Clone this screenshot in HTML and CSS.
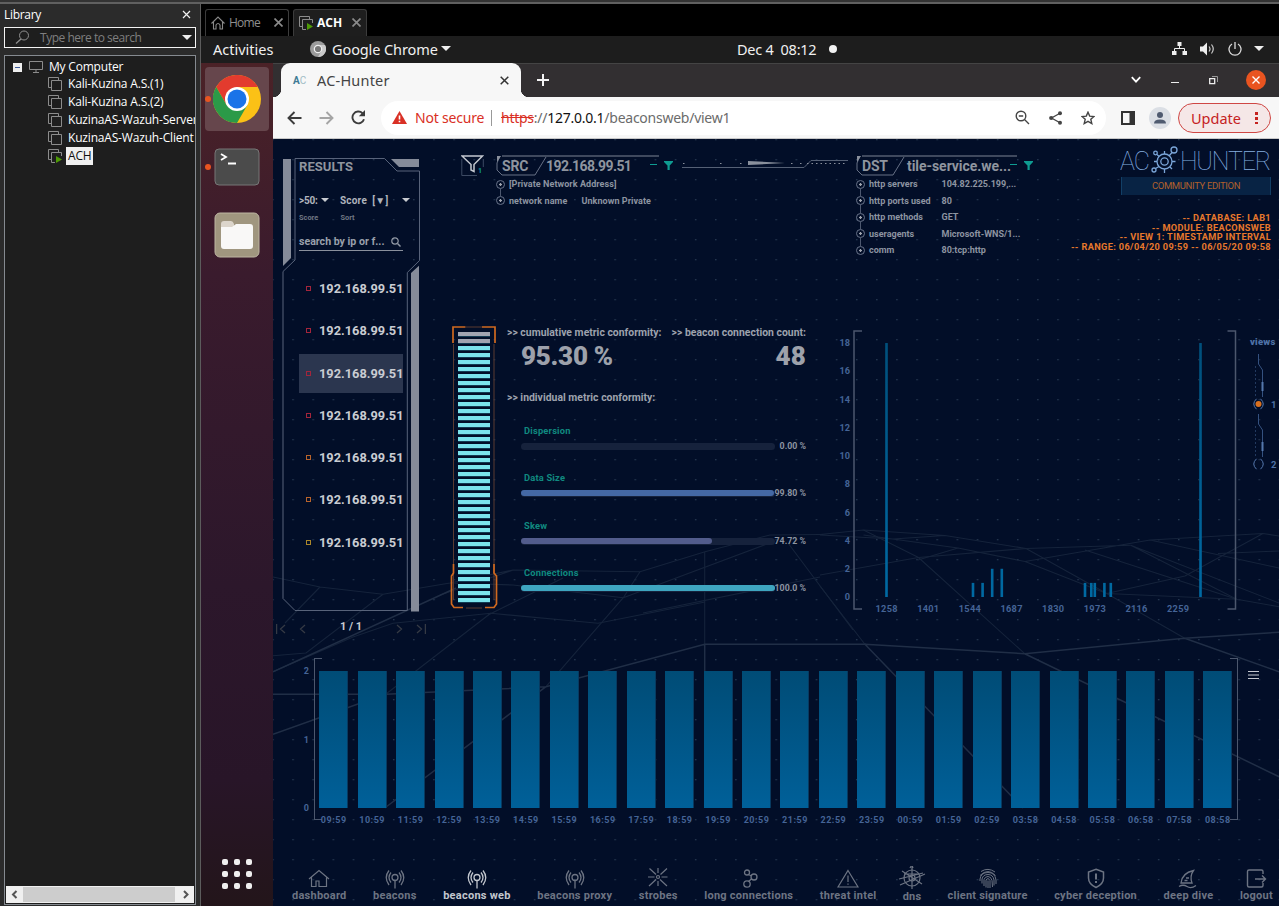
FILE: index.html
```html
<!DOCTYPE html>
<html lang="en">
<head>
<meta charset="utf-8">
<title>AC-Hunter</title>
<link rel="stylesheet" href="styles.css">
</head>
<body>
<svg class="defs" width="0" height="0">
  <defs>
    <symbol id="vm" viewBox="0 0 14 14"><path d="M3 10.500H.5V.5H10.500V3M3.500 3.500H13.500V13.500H3.500Z" fill="none" stroke="#8c8c8c"/></symbol>
    <symbol id="vmrun" viewBox="0 0 14 14"><path d="M3 10.500H.5V.5H10.500V3M7 13.500H3.500V3.500H13.500V7" fill="none" stroke="#8c8c8c"/><path d="M8 7l6 3.500-6 3.500z" fill="#4e9a06"/></symbol>
    <symbol id="beacon" viewBox="0 0 22 22"><g fill="none" stroke="currentColor" stroke-width="1.300"><circle cx="11" cy="9.500" r="3"/><path d="M11 12.500V20.500M7 14.500Q3 9.500 7 4.500M15 14.500Q19 9.500 15 4.500M5 17Q-.5 9.500 5 2.500M17 17Q22.500 9.500 17 2.500"/></g></symbol>
    <symbol id="funnel" viewBox="0 0 9 9"><path d="M0 0H9V1L5.700 4.500V9H3.500V4.500L0 1Z" fill="#0f9c92"/></symbol>
    <symbol id="rail" viewBox="0 0 14 44"><path d="M6.500 0V10L10.500 16V43" fill="none" stroke="#34517f"/><path d="M10.500 28V37" stroke="#5578ad" stroke-width="2"/><path d="M3.500 12V43" stroke="#22395f" stroke-dasharray="2 2"/></symbol>
  </defs>
</svg>
<div class="screen">
  <div class="strip"></div>
  <aside class="library">
    <div class="lib-head"><span>Library</span><svg width="9" height="9" viewBox="0 0 9 9"><path d="M1 1l7 7M8 1l-7 7" stroke="#f2f2f2" stroke-width="1.200"/></svg></div>
    <div class="lib-search"><svg width="15" height="15" viewBox="0 0 15 15"><circle cx="9" cy="5.500" r="4.500" fill="none" stroke="#8f8f8f"/><path d="M6 9L1 13.500" stroke="#8f8f8f" stroke-width="1.300"/></svg><span>Type here to search</span><i class="tri"></i></div>
    <div class="tree">
      <div class="root"><i class="minus"></i><svg width="14" height="12" viewBox="0 0 14 12"><path d="M.5.5H13.500V8.500H.5ZM7 9V11M4 11.500H10" fill="none" stroke="#8c8c8c"/></svg><span>My Computer</span></div>
      <div class="vm"><svg width="14" height="14"><use href="#vm"/></svg><span>Kali-Kuzina A.S.(1)</span></div>
      <div class="vm"><svg width="14" height="14"><use href="#vm"/></svg><span>Kali-Kuzina A.S.(2)</span></div>
      <div class="vm"><svg width="14" height="14"><use href="#vm"/></svg><span>KuzinaAS-Wazuh-Server</span></div>
      <div class="vm"><svg width="14" height="14"><use href="#vm"/></svg><span>KuzinaAS-Wazuh-Client</span></div>
      <div class="vm"><svg width="14" height="14"><use href="#vmrun"/></svg><span class="picked">ACH</span></div>
      <div class="hscroll"><svg width="17" height="17" viewBox="0 0 17 17"><path d="M10.500 5L7 8.500l3.500 3.500" fill="none" stroke="#555" stroke-width="2"/></svg><i></i><svg width="19" height="17" viewBox="0 0 19 17"><path d="M9 5l3.500 3.500L9 12" fill="none" stroke="#555" stroke-width="2"/></svg></div>
    </div>
  </aside>

  <main class="guest">
    <div class="vmtabs">
      <div class="vmtab home"><svg width="14" height="14" viewBox="0 0 14 14"><path d="M.5 7.500L7 1l6.500 6.500M2.500 6V13H5V9Q7 6 9 9V13H11.500V6" fill="none" stroke="#8a8a8a" stroke-width="1.100"/></svg><span>Home</span><svg class="x" width="9" height="9" viewBox="0 0 9 9"><path d="M.5.5l8 8M8.500.5l-8 8" stroke="#8a8a8a" stroke-width="1.700"/></svg></div>
      <div class="vmtab on"><svg width="14" height="14"><use href="#vmrun"/></svg><b>ACH</b><svg class="x" width="9" height="9" viewBox="0 0 9 9"><path d="M.5.5l8 8M8.500.5l-8 8" stroke="#8a8a8a" stroke-width="1.700"/></svg></div>
    </div>
    <div class="topbar">
      <span class="act">Activities</span>
      <svg class="gc" width="16" height="16" viewBox="0 0 16 16"><circle cx="8" cy="8" r="8" fill="#9b9b9b"/><path d="M8 4H15A8 8 0 0 1 8 16L12 9Z" fill="#c9c9c9"/><circle cx="8" cy="8" r="3.700" fill="#777" stroke="#eee" stroke-width="1.200"/></svg>
      <span class="appname">Google Chrome</span><i class="tri"></i>
      <span class="clock">Dec 4&nbsp; 08:12</span><i class="dot"></i>
      <span class="tray">
        <svg width="15" height="14" viewBox="0 0 15 14"><path d="M5.500 0h4v4h-4zM0 9h4.500v4H0zM10.500 9H15v4h-4.500z" fill="#eee"/><path d="M7.500 4V6.500M2.500 9V6.500H12.500V9" fill="none" stroke="#eee"/></svg>
        <svg width="15" height="14" viewBox="0 0 15 14"><path d="M0 4.500H3L7 .5V13.500L3 9.500H0Z" fill="#eee"/><path d="M9 4.500Q11 7 9 9.500M11.500 2.500Q15 7 11.500 11.500" fill="none" stroke="#ccc" stroke-width="1.200"/></svg>
        <svg width="14" height="14" viewBox="0 0 14 14"><path d="M4 2A6 6 0 1 0 10 2M7 0V7" fill="none" stroke="#ddd" stroke-width="1.300"/></svg>
        <i class="tri"></i>
      </span>
    </div>
    <div class="desk">
      <nav class="dock">
        <div class="tile lit"><i></i><svg width="48" height="48" viewBox="0 0 48 48"><circle cx="24" cy="24" r="24" fill="#fbc116"/><path d="M3.200 12A24 24 0 0 1 44.800 12H24L13.600 30Z" fill="#e33b2e"/><path d="M3.200 12A24 24 0 0 0 24 48L34.400 30L24 34L13.600 30Z" fill="#2b9a48"/><circle cx="24" cy="24" r="12" fill="#fff"/><circle cx="24" cy="24" r="9.500" fill="#1a73e8"/></svg></div>
        <div class="tile"><i></i><svg width="46" height="38" viewBox="0 0 46 38"><rect x="1" y="1" width="44" height="36" rx="4" fill="#4b4b4b" stroke="#777"/><path d="M7 6l5 3-5 3M14 15.500h8" fill="none" stroke="#fff" stroke-width="1.800"/></svg></div>
        <div class="tile"><svg width="46" height="46" viewBox="0 0 46 46"><rect x="1" y="1" width="44" height="44" rx="5" fill="#a0967f" stroke="#bdb5a2"/><path d="M7 12q0-3 3-3h7q2 0 3 3v6H7z" fill="#dcd5cb"/><path d="M7 15h11l4-3h14q3 0 3 3v19q0 3-3 3H10q-3 0-3-3z" fill="#f9f8f7"/></svg></div>
        <div class="grid9"><b></b><b></b><b></b><b></b><b></b><b></b><b></b><b></b><b></b></div>
      </nav>
      <section class="browser">
        <div class="tabstrip">
          <div class="tab"><span class="fav"><b>A</b>C</span><span class="ttl">AC-Hunter</span><svg width="9" height="9" viewBox="0 0 9 9"><path d="M.7.700l7.600 7.600M8.300.7L.7 8.300" stroke="#333" stroke-width="1.500"/></svg></div>
          <svg class="plus" width="12" height="12" viewBox="0 0 12 12"><path d="M6 0V12M0 6H12" stroke="#f4f4f4" stroke-width="2"/></svg>
          <span class="winctl">
            <svg width="10" height="8" viewBox="0 0 10 8"><path d="M.8 1.200L5 5.600 9.200 1.200" fill="none" stroke="#fff" stroke-width="1.800"/></svg>
            <svg width="8" height="8" viewBox="0 0 8 8"><path d="M0 6.500h8" stroke="#eee"/></svg>
            <svg width="9" height="9" viewBox="0 0 9 9"><path d="M.7 2.700h5v5h-5z" fill="none" stroke="#eee" stroke-width="1.300"/><path d="M3 .5H8.500V6" fill="none" stroke="#999"/></svg>
            <svg width="20" height="20" viewBox="0 0 20 20"><circle cx="10" cy="10" r="10" fill="#e95420"/><path d="M6.500 6.500l7 7M13.500 6.500l-7 7" stroke="#fff" stroke-width="1.400"/></svg>
          </span>
        </div>
        <div class="toolbar">
          <svg class="ar" width="15" height="14" viewBox="0 0 15 14"><path d="M14.500 7H1.500M7.500 1L1.500 7l6 6" fill="none" stroke="#3c3c3c" stroke-width="1.900"/></svg>
          <svg class="ar" width="15" height="14" viewBox="0 0 15 14"><path d="M.5 7H13.500M7.500 1l6 6-6 6" fill="none" stroke="#a5a5a5" stroke-width="1.900"/></svg>
          <svg class="ar" width="15" height="15" viewBox="0 0 15 15"><path d="M13 9.200A5.900 5.900 0 1 1 11.500 3.200" fill="none" stroke="#3c3c3c" stroke-width="1.900"/><path d="M14 0V6.200H7.800Z" fill="#3c3c3c"/></svg>
          <div class="omni">
            <svg width="15" height="13" viewBox="0 0 15 13"><path d="M7.500 0L15 13H0Z" fill="#d93025"/><path d="M7.500 4.500V8.500M7.500 9.700V11.300" stroke="#fff" stroke-width="1.600"/></svg>
            <span class="ns">Not secure</span><i class="sep"></i><span class="url"><s>https</s>://<b>127.0.0.1</b>/beaconsweb/view1</span>
            <svg width="15" height="15" viewBox="0 0 15 15"><circle cx="6" cy="6" r="4.800" fill="none" stroke="#444" stroke-width="1.400"/><path d="M9.500 9.500L14 14M3.800 6H8.200" stroke="#444" stroke-width="1.400"/></svg>
            <svg width="13" height="14" viewBox="0 0 13 14"><path d="M11 2.200L2.500 7l8.500 4.800" fill="none" stroke="#444" stroke-width="1.300"/><circle cx="11" cy="2.200" r="2" fill="#444"/><circle cx="2.200" cy="7" r="2.100" fill="#444"/><circle cx="11" cy="11.800" r="2" fill="#444"/></svg>
            <svg width="14" height="14" viewBox="0 0 14 14"><path d="M7 1.200l1.700 3.900 4.300.4-3.200 2.800 1 4.200L7 10.300l-3.800 2.200 1-4.200L1 5.500l4.300-.4z" fill="none" stroke="#444" stroke-width="1.400"/></svg>
          </div>
          <svg class="panelic" width="14" height="14" viewBox="0 0 14 14"><path d="M1 1H13V13H1Z" fill="none" stroke="#333" stroke-width="2"/><path d="M8.500 0H14V14H8.500Z" fill="#333"/></svg>
          <svg class="avatar" width="22" height="22" viewBox="0 0 22 22"><circle cx="11" cy="11" r="11" fill="#dbdfe5"/><circle cx="11" cy="8" r="3" fill="#4f5b70"/><path d="M5 16.500q0-4 6-4t6 4z" fill="#4f5b70"/></svg>
          <div class="update"><span>Update</span><i></i></div>
        </div>

        <div class="app">
          <svg class="mesh" viewBox="273 139 1006 767" width="1006" height="767">
            <defs><pattern id="dots" x="292.300" y="159" width="20.130" height="20" patternUnits="userSpaceOnUse"><rect width="1.500" height="1.300" fill="#24364f"/></pattern></defs>
            <rect x="273" y="139" width="1006" height="767" fill="url(#dots)"/>
            <g class="faint">
              <path d="M820 534.500L863.500 530 945 535.500 1026 548.500 1130.700 545.300M863.500 535L958 548 1025 561.500 1106.700 593.500M945 535.500L893 539 820 535M1025 561.500L1150 540 1263 533.500 1279 536M1106.700 593.500L1185 576 1263 533.500M1106.700 593.500L1236.700 599.300M1085 550L1236.700 599.300M1150 540L1279 568M1218 553.500L1279 551M918 560L958 548"/>
              <path d="M440 595L513.300 570 640 571.700 705 551.700 770 535 820 534.500M640 571.700L623.300 597.700 546 686.700M488 615L563 578M643 613L820 577M623.300 597.700L773 541.700M788 543L853 630M273 577L320 587 383 594.300 450 583 513 570M320 587L285 623M383 594.300L306 653 273 655.700"/>
              <path d="M820 575L918.500 557.500 1026 548.500M273 671.700L353 637 393 623.300 491 613.300 598 623.300 705 602M704.700 552V644M386 694L491 613M863.500 530L918.500 557.500 1024.700 653.700M1026 548.500L1106.700 593.500 1184.700 638.300M1130.700 545.300L1236.700 599.300 1279 606.700M1130.700 545.300L1279 603M820 586L864.700 644M623.300 597.700L513 585 450 583"/>
            </g>
            <g class="clear"><path d="M273 694.300H386L546 686.700 704.700 644.300H864.700L1024.700 653.700 1184.700 638.300 1279 632.300M273 734.300L386 694M273 671.700L456 588M384.700 808L546 686.700M704.700 644V808M864.700 644L1023 808M1024.700 653.700L1279 776.700M1184.700 638.300L1279 671.700"/></g>
          </svg>

          <div class="upper">
            <aside class="results">
              <svg class="frame" viewBox="273 139 160 490" width="160" height="490">
                <path d="M295 260V158.500H384.500L397 171H419.500V260.500L407.300 272.500V610.500H295L283 598.500V271.500Z" fill="none" stroke="#58637a"/>
                <path d="M283 159H291V258L283 266ZM391 159H419V167H399ZM411 273L419 265.700V611.500H411Z" fill="#858b99"/>
              </svg>
              <h2>RESULTS</h2>
              <div class="selects"><span class="s1">&gt;50:</span><i class="tri"></i><span class="s2">Score&nbsp; [▼]</span><i class="tri end"></i></div>
              <div class="hints"><span>Score</span><span>Sort</span></div>
              <div class="find"><span>search by ip or f...</span><svg width="10" height="10" viewBox="0 0 10 10"><circle cx="4" cy="4" r="3.200" fill="none" stroke="#9299a5" stroke-width="1.200"/><path d="M6.500 6.500l3 3" stroke="#9299a5" stroke-width="1.400"/></svg></div>
              <ul class="ips">
                <li><i></i>192.168.99.51</li><li><i></i>192.168.99.51</li><li class="cur"><i></i>192.168.99.51</li><li><i></i>192.168.99.51</li><li class="or"><i></i>192.168.99.51</li><li class="or"><i></i>192.168.99.51</li><li class="ye"><i></i>192.168.99.51</li>
              </ul>
              <div class="pager"><svg width="30" height="10" viewBox="0 0 30 10"><path d="M.6 0V10M9 1L4.500 5 9 9M29 1L24.500 5 29 9" fill="none" stroke="#353a44" stroke-width="1.300"/></svg><span>1 / 1</span><svg width="30" height="10" viewBox="0 0 30 10"><path d="M1 1L5.500 5 1 9M21 1L25.500 5 21 9M29.400 0V10" fill="none" stroke="#353a44" stroke-width="1.300"/></svg></div>
            </aside>

            <div class="work">
              <header class="head">
                <svg class="bigf" width="23" height="22" viewBox="0 0 23 22"><path d="M.8 4V20.500H16M22.300 12V4" fill="none" stroke="#3d4a63"/><path d="M1 1H21.500L13 9.500V16.500L10 15V9.500Z" fill="none" stroke="#c3c7cf" stroke-width="1.500"/><text x="17" y="17.500" font-size="7" fill="#0f9c92">1</text></svg>
                <div class="node src">
                  <div class="title"><svg class="tf" width="166" height="22" viewBox="0 0 166 22"><path d="M6 1H163" stroke="#7d8494"/><path d="M4 1L1 8V15L6 20H39L50 2" fill="none" stroke="#667085"/><path d="M1 1V7L5 1Z" fill="#8a909c"/></svg><span class="k">SRC</span><span class="v">192.168.99.51</span><i class="dash"></i><svg width="9" height="9"><use href="#funnel"/></svg></div>
                  <div class="row"><i class="ring"></i><span>[Private Network Address]</span></div>
                  <div class="row"><i class="ring"></i><span class="kk">network name</span><span>Unknown Private</span></div>
                </div>
                <svg class="link" width="167" height="12" viewBox="0 0 167 12"><path d="M0 8.500H122L129 1.500H166" fill="none" stroke="#556075"/><path d="M66 2L103 4L66 6Z" fill="#8a909c"/><path d="M1 4.500h1.500M38 4.500h1.500M58 4.500h1.500M109 4.500h1.500M118 4.500h1.500M125 4.500h40" stroke="#8a909c" stroke-dasharray="1.500 3"/></svg>
                <div class="node dst">
                  <div class="title"><svg class="tf" width="166" height="22" viewBox="0 0 166 22"><path d="M6 1H161" stroke="#7d8494"/><path d="M4 1L1 8V15L6 20H37L48 2" fill="none" stroke="#667085"/><path d="M1 1V7L5 1Z" fill="#8a909c"/></svg><span class="k">DST</span><span class="v">tile-service.we...</span><i class="dash"></i><svg width="9" height="9"><use href="#funnel"/></svg></div>
                  <div class="row"><i class="ring"></i><span class="kk">http servers</span><span>104.82.225.199,...</span></div>
                  <div class="row"><i class="ring"></i><span class="kk">http ports used</span><span>80</span></div>
                  <div class="row"><i class="ring"></i><span class="kk">http methods</span><span>GET</span></div>
                  <div class="row"><i class="ring"></i><span class="kk">useragents</span><span>Microsoft-WNS/1...</span></div>
                  <div class="row"><i class="ring"></i><span class="kk">comm</span><span>80:tcp:http</span></div>
                </div>
                <div class="brand">
                  <svg width="151" height="30" viewBox="1120 145 151 30"><g class="lg"><text x="1120" y="170" textLength="30">AC</text><text x="1180" y="170" textLength="91">HUNTER</text></g><g fill="none" stroke="#7aa5d8" stroke-width="1.300"><circle cx="1164.500" cy="161.500" r="7.500"/><circle cx="1164.500" cy="161.500" r="3.700"/><circle cx="1174" cy="150" r="3"/><circle cx="1155.500" cy="153" r="1.800"/><circle cx="1154" cy="170" r="2"/><path d="M1172 152.500L1169 156M1157 154.500L1159 156.500M1155.500 168.500L1159 166.500M1164.500 154V151M1164.500 169V173M1172 161.500H1175.500M1157 161.500H1154M1170 167l2 2"/></g></svg>
                  <div class="edition">COMMUNITY EDITION</div>
                  <p class="meta">-- DATABASE: LAB1<br>-- MODULE: BEACONSWEB<br>-- VIEW 1: TIMESTAMP INTERVAL<br>-- RANGE: 06/04/20 09:59 -- 06/05/20 09:58</p>
                </div>
              </header>

              <div class="detail">
                <div class="gauge">
                  <svg class="frame" width="48" height="284" viewBox="450 325 48 284"><path d="M453.500 344V600M494 344V600M466 327H482M466 608H482" stroke="#5a3a30" fill="none"/><path d="M465.500 327H453V343M482 327H495V343M453.500 564V573L451.500 576V604L454 607.500H463M494 564V573L496.500 576V604L494 607.500H485" fill="none" stroke="#d0691f" stroke-width="1.700"/></svg>
                  <div class="cells"></div>
                </div>
                <div class="metrics">
                  <div class="pair"><div><h3>&gt;&gt; cumulative metric conformity:</h3><strong class="in">95.30 %</strong></div><div class="cnt"><h3>&gt;&gt; beacon connection count:</h3><strong>48</strong></div></div>
                  <h3 class="ind">&gt;&gt; individual metric conformity:</h3>
                  <div class="m"><label>Dispersion</label><div class="bar"></div><em>0.00 %</em></div>
                  <div class="m"><label>Data Size</label><div class="bar"><i style="width:99.800%;background:#4468a4"></i></div><em>99.80 %</em></div>
                  <div class="m"><label>Skew</label><div class="bar"><i style="width:75.200%;background:#525c8c"></i></div><em>74.72 %</em></div>
                  <div class="m"><label>Connections</label><div class="bar"><i style="width:100%;background:#3ea5c0"></i></div><em>100.0 %</em></div>
                </div>
                <svg class="hist" width="420" height="295" viewBox="822 325 420 295"><path d="M862 331H854V609H862M1227.500 331H1235.500V609H1227.500" fill="none" stroke="#4c576d" stroke-width="1.500"/><defs><linearGradient id="hb" gradientUnits="userSpaceOnUse" x1="0" y1="343" x2="0" y2="597"><stop offset="0" stop-color="#00507c"/><stop offset="1" stop-color="#006aa3"/></linearGradient></defs><g id="hist"></g></svg>
                <div class="views"><b>views</b><svg width="14" height="44"><use href="#rail"/></svg><div class="v"><svg width="13" height="12" viewBox="0 0 13 12"><path d="M4.500.8Q-1 6 4.500 11.200M8.500.8Q14 6 8.500 11.200" fill="none" stroke="#5578ad"/><circle cx="6.500" cy="6" r="3" fill="#d9701e"/></svg><span>1</span></div><svg width="14" height="44"><use href="#rail"/></svg><div class="v"><svg width="13" height="12" viewBox="0 0 13 12"><path d="M4.500.8Q-1 6 4.500 11.200M8.500.8Q14 6 8.500 11.200" fill="none" stroke="#5578ad"/></svg><span>2</span></div></div>
              </div>
            </div>
          </div>

          <div class="timeline">
            <div class="axis"><span>2</span><span>1</span><span>0</span></div>
            <i class="br left"></i>
            <div class="cols" id="cols"></div>
            <i class="br right"></i>
            <svg class="burger" width="12" height="10" viewBox="0 0 12 10"><path d="M0 1.500H11M0 5H11M0 8.500H11" stroke="#c4c8d0" stroke-width="1.200"/></svg>
          </div>

          <nav class="menu">
            <a><svg width="22" height="22" viewBox="0 0 22 22"><path d="M1 11L11 2.500 21 11M3.500 9.500V18.500H8V13H11V18.500H18.500V9.500" fill="none" stroke="currentColor" stroke-width="1.200"/></svg>dashboard</a>
            <a><svg width="22" height="22"><use href="#beacon"/></svg>beacons</a>
            <a class="on"><svg width="22" height="22"><use href="#beacon"/></svg>beacons web</a>
            <a><svg width="22" height="22"><use href="#beacon"/></svg>beacons proxy</a>
            <a><svg width="22" height="22" viewBox="0 0 22 22"><g fill="none" stroke="currentColor" stroke-width="1.200"><circle cx="11" cy="9" r="1.500"/><path d="M11 0V5M11 13V18M1 9H7.500M14.500 9H20.500M2.500.5L9 6.500M20 .5L13.500 6.500M2 18L9 11.500M20 18L13 11.500"/></g></svg>strobes</a>
            <a><svg width="22" height="22" viewBox="0 0 22 22"><g fill="none" stroke="currentColor" stroke-width="1.300"><circle cx="9" cy="4.500" r="2.500"/><circle cx="16" cy="9" r="3"/><circle cx="9" cy="16" r="3.200"/><path d="M10 6.500L14 8M10.500 13.500L14 10.500"/></g></svg>long connections</a>
            <a><svg width="22" height="22" viewBox="0 0 22 22"><path d="M11 2.500L21 19H1ZM11 7.500V14M11 15.500V16.700" fill="none" stroke="currentColor" stroke-width="1.200"/></svg>threat intel</a>
            <a class="dns"><svg class="wide" width="28" height="24" viewBox="0 0 28 24"><g fill="none" stroke="currentColor" stroke-width="1.200"><circle cx="14" cy="12" r="8"/><circle cx="14" cy="12" r="3"/><path d="M14 1V23M1 13L25 7M4 5L24 18M2 19L27 8M12 2Q14-2 15 2M6 8H22"/></g></svg>dns</a>
            <a class="tight"><svg width="22" height="22" viewBox="0 0 22 22"><g fill="none" stroke="currentColor" stroke-width="1"><path d="M4 3.500Q11-1 18 4M3 7.500Q11-.5 18.500 7.500M3 13V11Q4 4.500 11 4.500T19 12V16M5 15.500V11Q6 6.500 11 6.500T17 12V17.500M7 18V11.500Q8 8.500 11 8.500T15 12.500L15.500 19M9 19.500V12Q11 9 13 12.500V20M11 12.500V20"/></g></svg>client signature</a>
            <a><svg width="22" height="22" viewBox="0 0 22 22"><path d="M11 1.200L18.500 4V10Q18.500 16 11 19.500Q3.500 16 3.500 10V4Z" fill="none" stroke="currentColor" stroke-width="1.500"/><path d="M11 5.500V11.500M11 13V15" stroke="currentColor" stroke-width="2"/></svg>cyber deception</a>
            <a><svg width="22" height="22" viewBox="0 0 22 22"><path d="M4 15Q5 5 16.500 2.500Q12.500 8 15 15ZM2 18.500Q6 16 10 18.500T19 17.500M9 10h3M7.500 12.500h3" fill="none" stroke="currentColor" stroke-width="1.300"/></svg>deep dive</a>
            <a><svg width="22" height="22" viewBox="0 0 22 22"><path d="M18 6V3.500Q18 2 16.500 2H4Q2.500 2 2.500 3.500V17.500Q2.500 19 4 19H16.500Q18 19 18 17.500V15M10 11H20M17 7.500L20.500 11 17 14.500" fill="none" stroke="currentColor" stroke-width="1.400"/></svg>logout</a>
          </nav>
        </div>
      </section>
    </div>
  </main>
</div>
<script src="app.js"></script>
</body>
</html>
```
FILE: app.js
```js
// Hourly connection counts along the bottom of the dashboard
const hours = ['09:59','10:59','11:59','12:59','13:59','14:59','15:59','16:59','17:59','18:59','19:59','20:59','21:59','22:59','23:59','00:59','01:59','02:59','03:58','04:58','05:58','06:58','07:58','08:58'];
document.getElementById('cols').innerHTML = hours.map(h => `<div class="col"><i></i><span>${h}</span></div>`).join('');

// Timestamp interval histogram: [x, count]
const bars = [[886.5,18],[973,1],[982.6,1],[992.2,2],[1001.8,2],[1085,1],[1091.3,1],[1094.8,1],[1104.4,1],[1110.8,1],[1200.5,18]];
const ticks = [1258,1401,1544,1687,1830,1973,2116,2259];
let out = '';
for (const [x, n] of bars) out += `<rect x="${x - 1.3}" y="${597 - n * 14.11}" width="2.6" height="${n * 14.11}" fill="url(#hb)"/>`;
for (let n = 0; n <= 18; n += 2) out += `<text x="850" y="${600.2 - n * 14.11}" text-anchor="end">${n}</text>`;
ticks.forEach((t, i) => { out += `<text x="${886.5 + i * 41.65}" y="612" text-anchor="middle" textLength="22">${t}</text>`; });
document.getElementById('hist').innerHTML = out;
```
FILE: styles.css
```css
*{box-sizing:border-box}
body{margin:0;background:#2b2b2b;overflow:hidden}
svg{flex:none;display:block}
i,em{font-style:normal}
.defs{position:absolute}
.screen{width:1279px;height:906px;display:grid;grid-template-columns:201px 1fr;grid-template-rows:4px 1fr}
.strip{grid-column:1/3;background:#333;border-bottom:2px solid #606060}
.tri{border:5px solid transparent;border-top-color:#eee;border-bottom:0;flex:none}

/* VM library sidebar */
.library{background:#2b2b2b;border-right:1px solid #5c5c5c;padding:2px 4px 0;font:12px "Open Sans","Noto Sans",sans-serif;color:#fff;display:flex;flex-direction:column}
.lib-head{height:17px;display:flex;justify-content:space-between;align-items:center;padding-right:5px;letter-spacing:-.3px}
.lib-search{margin-top:4px;height:21px;border:1px solid #f4f4f4;background:#1e1e1e;display:flex;align-items:center;padding:0 3px 0 10px;color:#7f7f7f;letter-spacing:-.5px;width:192px}
.lib-search span{margin-left:10px;flex:1;letter-spacing:-.45px;letter-spacing:-.5px;letter-spacing:-.48px;line-height:19px}
.tree{margin-top:7px;width:192px;flex:1;border:1px solid #858a90;background:#1e1e1e;display:flex;flex-direction:column;overflow:hidden;padding:1px 1px 1px;margin-bottom:1px}
.root,.vm{height:18px;display:flex;align-items:center;white-space:nowrap;letter-spacing:-.18px;flex:none}
.root{padding-left:7px}
.root svg{margin:2px 6px 0 7px}
.root span{letter-spacing:-.2px}
.minus{width:9px;height:9px;background:linear-gradient(#3c5a9a,#3c5a9a) center/5px 1px no-repeat #eee;margin-top:3px}
.vm{padding-left:42px}
.vm span{margin-left:4px;padding:0 2px;line-height:18px}
.vm .picked{background:#f0f0f0;color:#111}
.hscroll{margin-top:auto;height:17px;background:#f0f0f0;display:flex}
.hscroll i{flex:1;background:#cdcdcd;margin:1px 0}

/* guest screen */
.guest{display:flex;flex-direction:column;min-width:0;background:#000}
.vmtabs{height:32px;display:flex;padding:5px 0 0 4px;gap:4px;font:12px "Open Sans",sans-serif;color:#8f8f8f}
.vmtab{border:1px solid #3c3c3c;border-bottom:0;border-radius:3px 3px 0 0;display:flex;align-items:center;padding-left:5px;gap:4px}
.vmtab .x{margin-left:auto;margin-right:5px}
.home{width:84px;letter-spacing:-.75px;padding-bottom:1px}
.vmtab.on{width:74px;background:#1e1e1e;color:#fff;padding-bottom:1px}
.topbar{height:27px;background:#1d1d1d;color:#f0f0f0;font:14.500px "Noto Sans",sans-serif;display:flex;align-items:center;padding:0 0 2px 12px}
.act{width:97px;letter-spacing:0}
.appname{margin:0 4px 0 6px;width:105px;white-space:nowrap;letter-spacing:-.1px}
.clock{margin-left:286px;width:79px;white-space:nowrap;letter-spacing:-.25px}
.dot{width:8px;height:8px;border-radius:50%;background:#f2f2f2;margin-left:13px}
.tray{margin:0 15px 0 auto;display:flex;align-items:center;gap:13px}
.tray .tri{margin-left:-1px}
.desk{flex:1;display:flex}
.dock{width:72px;background:linear-gradient(#4b2227,#3a1b2d 25%,#2c172b 62%,#281528 85%,#23151a);display:flex;flex-direction:column;align-items:center;padding-top:4px}
.tile{width:64px;height:64px;border-radius:4px;margin-bottom:4px;display:flex;align-items:center;justify-content:center;position:relative}
.tile i{position:absolute;left:0;top:29px;width:6px;height:6px;border-radius:50%;background:#e95420}
.tile.lit{background:#66464c}
.grid9{margin-top:auto;margin-bottom:17px;display:grid;grid-template-columns:repeat(3,6px);gap:6px}
.grid9 b{height:6px;background:#f0efef;border-radius:2px}

/* chrome window */
.browser{flex:1;display:flex;flex-direction:column;min-width:0;font-family:"Noto Sans",sans-serif}
.tabstrip{height:34px;background:#322f31;border-top:1px solid #444;display:flex;align-items:center;padding:0 0 1px 8px}
.tab{width:240px;height:34px;background:#f7f7f7;border-radius:9px 9px 0 0;display:flex;align-items:center;padding:0 12px;font-size:14.500px;color:#444;flex:none;position:relative}
.tab::before,.tab::after{content:"";position:absolute;bottom:0;width:8px;height:8px;background:radial-gradient(circle at 0 0,#322f31 8px,#f7f7f7 8.500px);left:-8px}
.tab::after{left:240px;background:radial-gradient(circle at 100% 0,#322f31 8px,#f7f7f7 8.500px)}
.tab .ttl{flex:1;letter-spacing:.2px}
.fav{width:24px;font:10px "Roboto",sans-serif;color:#9fbcc6;letter-spacing:0}
.fav b{color:#3f7c95}
.plus{margin-left:16px}
.winctl{margin:0 13px 0 auto;display:flex;align-items:center;gap:30px}
.winctl svg:nth-child(3){margin-right:-2px}
.toolbar{height:42px;background:#f7f7f7;border-bottom:1px solid #c8c8c8;display:flex;align-items:center;padding-left:14px}
.ar{margin-right:17px}
.omni{width:725px;height:34px;border-radius:17px;background:#fff;display:flex;align-items:center;padding:0 11px;font-size:14px;flex:none;margin-left:-2px}
.omni svg+svg{margin-left:19px}
.ns{color:#d93025;margin-left:8px;width:68px;white-space:nowrap;letter-spacing:-.2px}
.sep{width:1px;height:16px;background:#999;margin:0 9px 0 8px}
.url{color:#6b6b6b;flex:1;letter-spacing:-.25px}
.url s{color:#d93025}
.url b{font-weight:400;color:#111}
.panelic{margin-left:15px}
.avatar{margin-left:14px}
.update{margin-left:7px;width:93px;height:30px;border-radius:15px;border:1px solid #cf4744;background:#f5e7e7;color:#c5221f;font-size:14.500px;display:flex;align-items:center;padding-left:12px}
.update i{width:3px;height:13px;margin-left:14px;background:radial-gradient(circle,#c5221f 1.500px,transparent 1.600px) 0 0/3px 5px}

/* dashboard */
.app{flex:1;position:relative;background:#020e28;display:flex;flex-direction:column;font:700 10px "Roboto",sans-serif;color:#8d94a1;overflow:hidden}
.mesh{position:absolute;left:0;top:0}
.mesh path{fill:none;stroke:#1c2a43}
.mesh .faint path{stroke:#15233b;stroke-width:1.100}
.mesh .clear path{stroke:#202e46;stroke-width:1.500}
.upper,.timeline,.menu{position:relative}
.upper{height:511px;display:flex}
.results{width:160px;position:relative;padding:20px 30px 0 26px}
.frame{position:absolute;left:0;top:0}
.results h2{margin:0;font-size:13px;line-height:15px;letter-spacing:.05px;color:#8f959f}
.selects{margin-top:18px;height:16px;display:flex;align-items:center;gap:3px;font-size:10px;color:#b0b4bc}
.selects .tri{border-width:4px;border-bottom:0;border-top-color:#c8cbd0}
.s1{width:19px;white-space:nowrap;letter-spacing:-.2px}
.s2{margin-left:8px;letter-spacing:.2px}
.selects .end{margin-left:auto;margin-right:-7px}
.hints{display:flex;margin-top:4px;height:12px;line-height:12px;font-size:7.400px;color:#6f7683}
.hints span{width:41.500px}
.find{margin-top:9px;height:18px;border-bottom:1px solid #8a909c;display:flex;align-items:center;justify-content:space-between;font-size:10.600px;color:#9aa0ab;padding-right:2px;white-space:nowrap}
.ips{list-style:none;margin:18px 0 0;padding:0}
.ips li{height:39px;margin-bottom:3.300px;display:flex;align-items:center;font-size:12.800px;color:#c9ccd2;padding-left:7px;gap:8px;white-space:nowrap}
.ips i{width:5px;height:5px;border:1px solid #a3253c;flex:none}
.ips .cur{background:#2b364f}
.ips .or i{border-color:#b8632c}
.ips .ye i{border-color:#ab872a}
.pager{display:flex;justify-content:space-between;align-items:center;margin:57px -23px 0 -23px;height:16px;color:#c9ccd2;font-size:11px}
.pager svg{margin-top:5px}
.work{flex:1;display:flex;flex-direction:column}
.head{height:176px;display:flex;padding-top:16px}
.bigf{margin-left:28px}
.bigf text{font-weight:700}
.node{width:178px;flex:none}
.src{margin-left:12px;letter-spacing:.07px}
.title{height:21px;display:flex;align-items:center;position:relative;white-space:nowrap}
.tf{position:absolute;left:0;top:0}
.title span{font-size:14px;color:#8f959f}
.title .k{margin-left:6px;width:44px;letter-spacing:-.2px}
.title .v{width:101px}
.src .v{letter-spacing:-.55px}
.dst .k{width:45px}
.dst .v{width:103px;letter-spacing:-.05px}
.dash{width:7px;height:1.500px;background:#0f9c92;margin-right:7px;margin-top:-2px}
.src .dash{margin-left:3px}
.row{height:16.500px;display:flex;align-items:center;font-size:9px;white-space:nowrap;position:relative}
.ring{width:9px;height:9px;border:1px solid #69738a;border-radius:50%;background:radial-gradient(circle,#a0a5b0 1px,transparent 1.500px);margin-right:4px}
.row+.row .ring::before{content:"";position:absolute;left:4px;top:-4px;width:1px;height:8px;background:#4d586f}
.kk{width:72.500px}
.link{margin-left:8px;margin-top:4px}
.dst{margin-left:7px}
.brand{margin-left:86px;width:151px;flex:none;margin-top:-10px;display:flex;flex-direction:column;align-items:flex-end}
.lg text{font:100 25px "Roboto",sans-serif;fill:#86b0e2}
.edition{width:150px;height:18px;margin-top:2px;background:#082344;border:solid #123f66;border-width:0 1px;text-align:center;font:400 9.500px/18px "Roboto",sans-serif;color:#b0602c;letter-spacing:-.35px}
.meta{margin:18px 0 0;color:#e8792c;font-size:9.200px;line-height:9.500px;text-align:right;white-space:nowrap;letter-spacing:.36px}
.detail{flex:1;display:flex}
.gauge{position:relative;margin-left:17px;width:48px;height:294px;padding:17px 8px 0}
.gauge .frame{top:10px}
.cells{height:272px;background:linear-gradient(#a1a4b0 0 0) 0 0/100% 4px no-repeat,linear-gradient(#a1a4b0 0 0) 0 7px/100% 4px no-repeat,repeating-linear-gradient(#7be3ec 0 4px,#123a52 4px 5px,#020e28 5px 7px)}
.metrics{margin-left:9px;width:299px;padding-top:11px}
.pair{display:flex;justify-content:space-between}
h3{margin:0;font-size:10.400px;line-height:13px;color:#9da2ad;white-space:nowrap;letter-spacing:.02px}
strong{display:block;font-size:26px;line-height:30px;color:#9da1ab;margin-top:2px;letter-spacing:-.3px}
.in{margin-left:14px}
.cnt{text-align:right}
.cnt strong{letter-spacing:.2px}
.ind{margin-top:20px}
.m{display:grid;grid-template-columns:254px 1fr;padding-left:14px;height:47.300px;align-content:start;row-gap:5px}
.ind+.m{margin-top:21px}
.m label{grid-column:1/3;font-size:9.300px;line-height:12px;color:#108a80;padding-left:3px;letter-spacing:.2px}
.bar{height:7px;border-radius:4px;background:#16223c;align-self:center}
.bar i{display:block;height:6px;border-radius:3px}
.m em{font-size:8.800px;line-height:9px;text-align:right;margin-left:-4px;white-space:nowrap}
.hist{margin-left:16px;margin-top:10px}
.hist text{font:700 9.200px "Roboto",sans-serif;fill:#456496}
.views{margin-left:6px;padding-top:20px;color:#4f72a6;font-size:9.500px;width:31px;white-space:nowrap}
.views>b{display:block;line-height:14px;margin-left:2px;letter-spacing:.2px}
.views>svg{margin-top:5px;margin-left:4px}
.views .v{display:flex;align-items:center;height:12px;gap:6px;margin-left:4px}
.views .v+svg{margin-top:4px}

.timeline{height:182px;display:flex;padding-top:8px;font-size:9px;color:#456496}
.axis{width:36px;height:156px;padding-top:8px;display:flex;flex-direction:column;justify-content:space-between;text-align:right;line-height:11px;margin-right:4.500px}
.br{width:8px;height:162px;border:solid #4c576d;border-width:1px 0;flex:none}
.br.left{border-left-width:1.500px;margin-right:-7px}
.br.right{border-right-width:1px;margin-left:-7px}
.cols{width:922.400px;flex:none;display:flex;padding-top:13px}
.col{flex:1;text-align:center}
.col i{display:block;width:29px;height:137px;margin:0 auto;background:linear-gradient(#004c76,#006099);border-right:1px solid #083a60}
.col span{display:block;line-height:12px;margin-top:6px;letter-spacing:.5px}
.burger{margin-left:10px;margin-top:12px}

.menu{height:74px;display:flex;justify-content:space-between;padding:34px 6px 0 19px;color:#6d7483;font-size:11px;letter-spacing:.25px}
.menu a{display:flex;flex-direction:column;align-items:center;line-height:13px;white-space:nowrap}
.menu svg{margin-bottom:-1px;margin-top:2px}
.menu .tight{letter-spacing:.2px}
.menu .dns{margin:0 -5px}
.menu .wide{margin:0}
.menu .on{color:#c3c7ce}
```
